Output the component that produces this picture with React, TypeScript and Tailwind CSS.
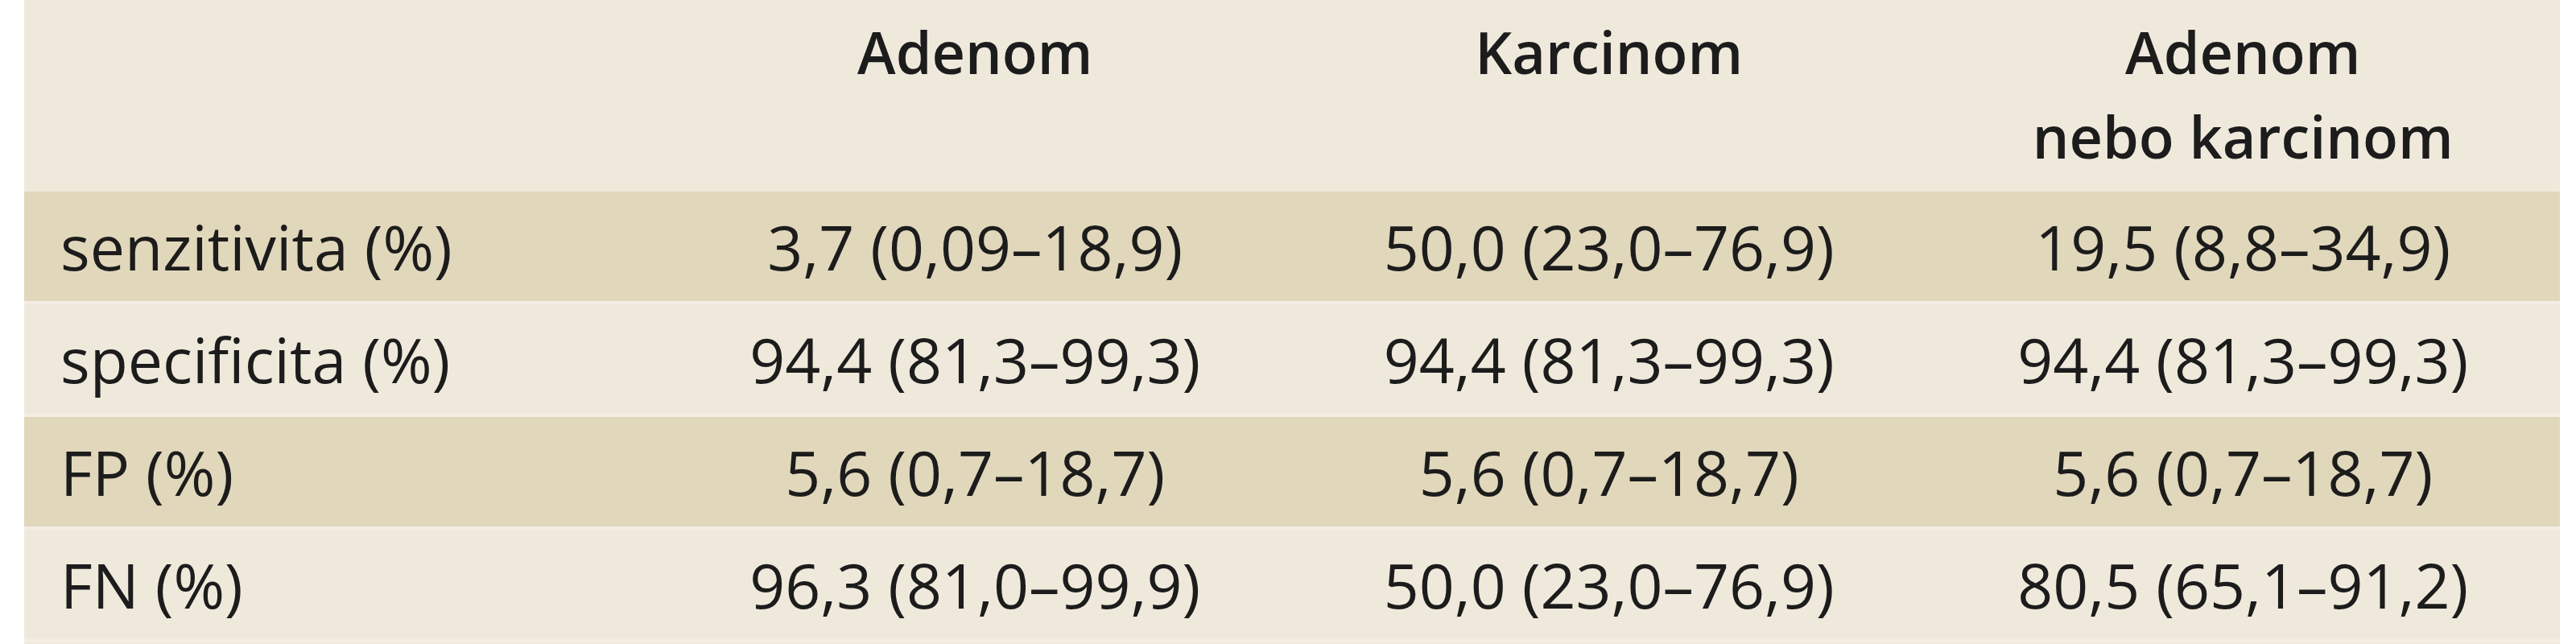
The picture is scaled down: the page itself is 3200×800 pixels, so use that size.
import React from "react";

const rows: { label: string; values: string[]; dark: boolean }[] = [
  { label: "senzitivita (%)", values: ["3,7 (0,09–18,9)", "50,0 (23,0–76,9)", "19,5 (8,8–34,9)"], dark: true },
  { label: "specificita (%)", values: ["94,4 (81,3–99,3)", "94,4 (81,3–99,3)", "94,4 (81,3–99,3)"], dark: false },
  { label: "FP (%)", values: ["5,6 (0,7–18,7)", "5,6 (0,7–18,7)", "5,6 (0,7–18,7)"], dark: true },
  { label: "FN (%)", values: ["96,3 (81,0–99,9)", "50,0 (23,0–76,9)", "80,5 (65,1–91,2)"], dark: false },
];

export default function App() {
  return (
    <div className="w-[3200px] h-[800px] bg-white pl-[30px] overflow-hidden font-['Open_Sans',sans-serif] text-[#1c1c1c]">
      <div className="w-[3150px] h-[800px] bg-[#efe9dc] flex flex-col">
        <div className="grid grid-cols-4 h-[238px] bg-[#efe9dc] text-[72px] font-semibold leading-[105px] text-center">
          <div />
          <div className="pt-[12px]">Adenom</div>
          <div className="pt-[12px]">Karcinom</div>
          <div className="pt-[12px]">
            Adenom
            <br />
            nebo karcinom
          </div>
        </div>
        {rows.map((r) => (
          <div
            key={r.label}
            className={
              r.dark
                ? "grid grid-cols-4 h-[140px] bg-[#e1d7bb] border-b-[4px] border-[#f3eee4] text-[77px] leading-none"
                : "grid grid-cols-4 h-[140px] bg-[#efe9dc] border-b-[4px] border-[#f3eee4] text-[77px] leading-none"
            }
          >
            <div className="flex items-center pl-[45px]">{r.label}</div>
            {r.values.map((v, i) => (
              <div key={i} className="flex items-center justify-center">
                {v}
              </div>
            ))}
          </div>
        ))}
      </div>
    </div>
  );
}
